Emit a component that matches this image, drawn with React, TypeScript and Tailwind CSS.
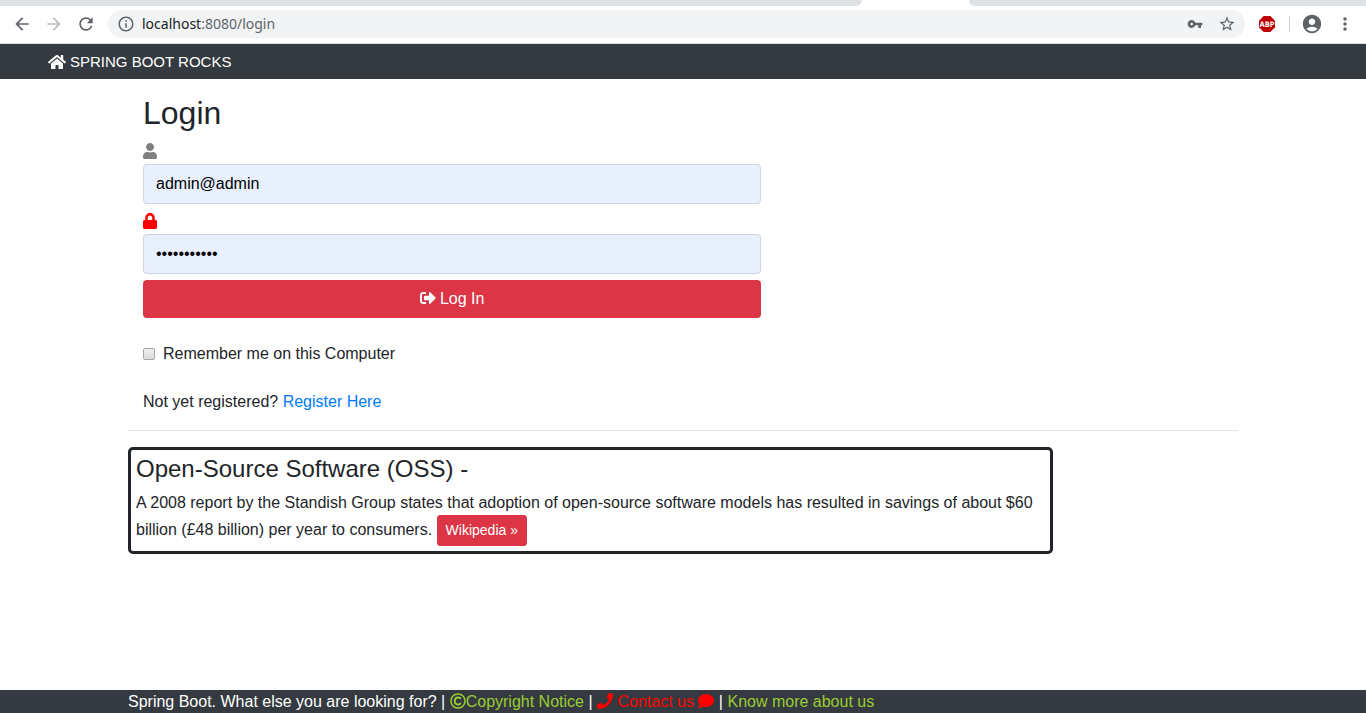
import { useState } from "react";
import { FaComment, FaHome, FaLock, FaPhone, FaRegCopyright, FaSignOutAlt, FaUser } from "react-icons/fa";
import {
  MdAccountCircle,
  MdArrowBack,
  MdArrowForward,
  MdInfoOutline,
  MdMoreVert,
  MdRefresh,
  MdStarBorder,
  MdVpnKey,
} from "react-icons/md";

function AdBlockIcon() {
  return (
    <svg viewBox="0 0 16 16" className="h-4 w-4" aria-hidden="true">
      <path d="M4.7 0h6.6L16 4.7v6.6L11.3 16H4.7L0 11.3V4.7z" fill="#c00000" />
      <text x="8" y="10.7" textAnchor="middle" fontSize="7.6" fontWeight="700" fill="#fff" fontFamily="'Open Sans', sans-serif" textRendering="geometricPrecision">
        ABP
      </text>
    </svg>
  );
}

function BrowserBar() {
  return (
    <header className="border-b border-[#dcdee2] bg-white">
      <div className="flex h-[6px] bg-white">
        <div className="flex-1 rounded-br-lg bg-[#dee1e6]" />
        <div className="w-[107px]" />
        <div className="w-[397px] rounded-bl-lg bg-[#dee1e6]" />
      </div>
      <div className="flex h-[37px] items-center pr-[11px] pb-px pl-3 text-[#5f6368]">
        <button type="button" aria-label="Back" className="mr-3"><MdArrowBack className="h-5 w-5" /></button>
        <button type="button" aria-label="Forward" className="mr-3 text-[#babcbe]"><MdArrowForward className="h-5 w-5" /></button>
        <button type="button" aria-label="Reload" className="mr-3"><MdRefresh className="h-5 w-5" /></button>
        <div className="flex h-7 flex-1 items-center rounded-full bg-[#f1f3f4] px-[9px]">
          <MdInfoOutline className="h-[18px] w-[18px] shrink-0" />
          <div className="flex-1 pl-[7px] font-['Noto_Sans',sans-serif] text-sm">
            <span className="text-[#202124]">localhost</span>:8080/login
          </div>
          <button type="button" aria-label="Saved passwords" className="mr-[15px]"><MdVpnKey className="h-4 w-4" /></button>
          <button type="button" aria-label="Bookmark"><MdStarBorder className="h-[18px] w-[18px]" /></button>
        </div>
        <button type="button" aria-label="Ad blocker" className="mr-[14px] ml-[14px]"><AdBlockIcon /></button>
        <div className="mr-[11px] h-4 w-px bg-[#cdcfd1]" />
        <button type="button" aria-label="Profile" className="mr-3"><MdAccountCircle className="h-[22px] w-[22px]" /></button>
        <button type="button" aria-label="Menu"><MdMoreVert className="h-5 w-5" /></button>
      </div>
    </header>
  );
}

const field =
  "block h-10 w-full rounded border border-[#ced4da] bg-[#e8f0fe] px-3 text-base text-black outline-none";

function LoginForm() {
  const [email, setEmail] = useState("admin@admin");
  const [password, setPassword] = useState("admin123456");
  const [remember, setRemember] = useState(false);

  return (
    <form className="px-[15px]" onSubmit={(e) => e.preventDefault()}>
      <h1 className="mb-2 text-[32px] leading-[38px]">Login</h1>
      <div className="w-[57.22%]">
        <label htmlFor="email" className="flex h-6 items-center pb-[2px] text-[#808080]">
          <FaUser className="h-4 w-[14px]" aria-label="Email" />
        </label>
        <input id="email" type="text" className={field} value={email} onChange={(e) => setEmail(e.target.value)} />
        <label htmlFor="password" className="mt-[6px] flex h-6 items-center pb-[2px] text-[#ff0000]">
          <FaLock className="h-4 w-[14px]" aria-label="Password" />
        </label>
        <input id="password" type="password" className={field} value={password} onChange={(e) => setPassword(e.target.value)} />
        <button type="submit" className="mt-[6px] block h-[38px] w-full rounded bg-[#dc3545] text-white">
          <FaSignOutAlt className="mb-1 inline h-4 w-4" /> Log In
        </button>
      </div>
      <div className="mt-6 flex items-center gap-2">
        <input
          id="remember"
          type="checkbox"
          checked={remember}
          onChange={(e) => setRemember(e.target.checked)}
          className="h-3 w-3 appearance-none rounded-xs border border-[#a6a6a6] bg-linear-to-b from-[#eeeeee] to-[#dcdcdc] checked:to-[#0075ff]"
        />
        <label htmlFor="remember">Remember me on this Computer</label>
      </div>
      <p className="mt-6">
        Not yet registered? <a href="#register" className="text-[#007bff]">Register Here</a>
      </p>
    </form>
  );
}

export default function App() {
  return (
    <div className="flex min-h-screen flex-col bg-white font-['Liberation_Sans',Arial,sans-serif] text-base text-[#212529]">
      <BrowserBar />
      <nav className="flex h-[35px] items-center bg-[#343a40] px-12 text-white">
        <a href="#home" className="flex items-center gap-1 pt-px text-[15px]">
          <FaHome className="h-4 w-[18px]" />
          SPRING BOOT ROCKS
        </a>
      </nav>
      <main className="mx-auto w-full max-w-[1110px] pt-[15px]">
        <LoginForm />
        <hr className="my-4 border-[#e5e5e5]" />
        <section className="w-10/12 rounded-[5px] border-3 border-[#212529] p-[5px]">
          <h2 className="mb-2 text-2xl leading-7">Open-Source Software (OSS) -</h2>
          <p>
            A 2008 report by the Standish Group states that adoption of open-source software models has resulted in
            savings of about $60 billion (£48 billion) per year to consumers.{" "}
            <a href="#wikipedia" className="inline-block rounded-[3px] border border-[#dc3545] bg-[#dc3545] px-2 py-1 align-middle text-sm leading-[21px] text-white">
              Wikipedia »
            </a>
          </p>
        </section>
      </main>
      <footer className="mt-auto h-[23px] bg-[#343a40] text-white">
        <div className="mx-auto w-full max-w-[1110px] leading-[23px]">
          Spring Boot. What else you are looking for? |{" "}
          <a href="#copyright" className="text-[#9acd32]">
            <FaRegCopyright className="mb-1 inline h-4 w-4" />Copyright Notice
          </a>{" "}
          |{" "}
          <a href="#contact" className="text-[#ff0000]">
            <FaPhone className="mb-1 inline h-4 w-4" /> Contact us <FaComment className="mb-1 inline h-4 w-4" />
          </a>{" "}
          |{" "}
          <a href="#about" className="text-[#9acd32]">Know more about us</a>
        </div>
      </footer>
    </div>
  );
}
